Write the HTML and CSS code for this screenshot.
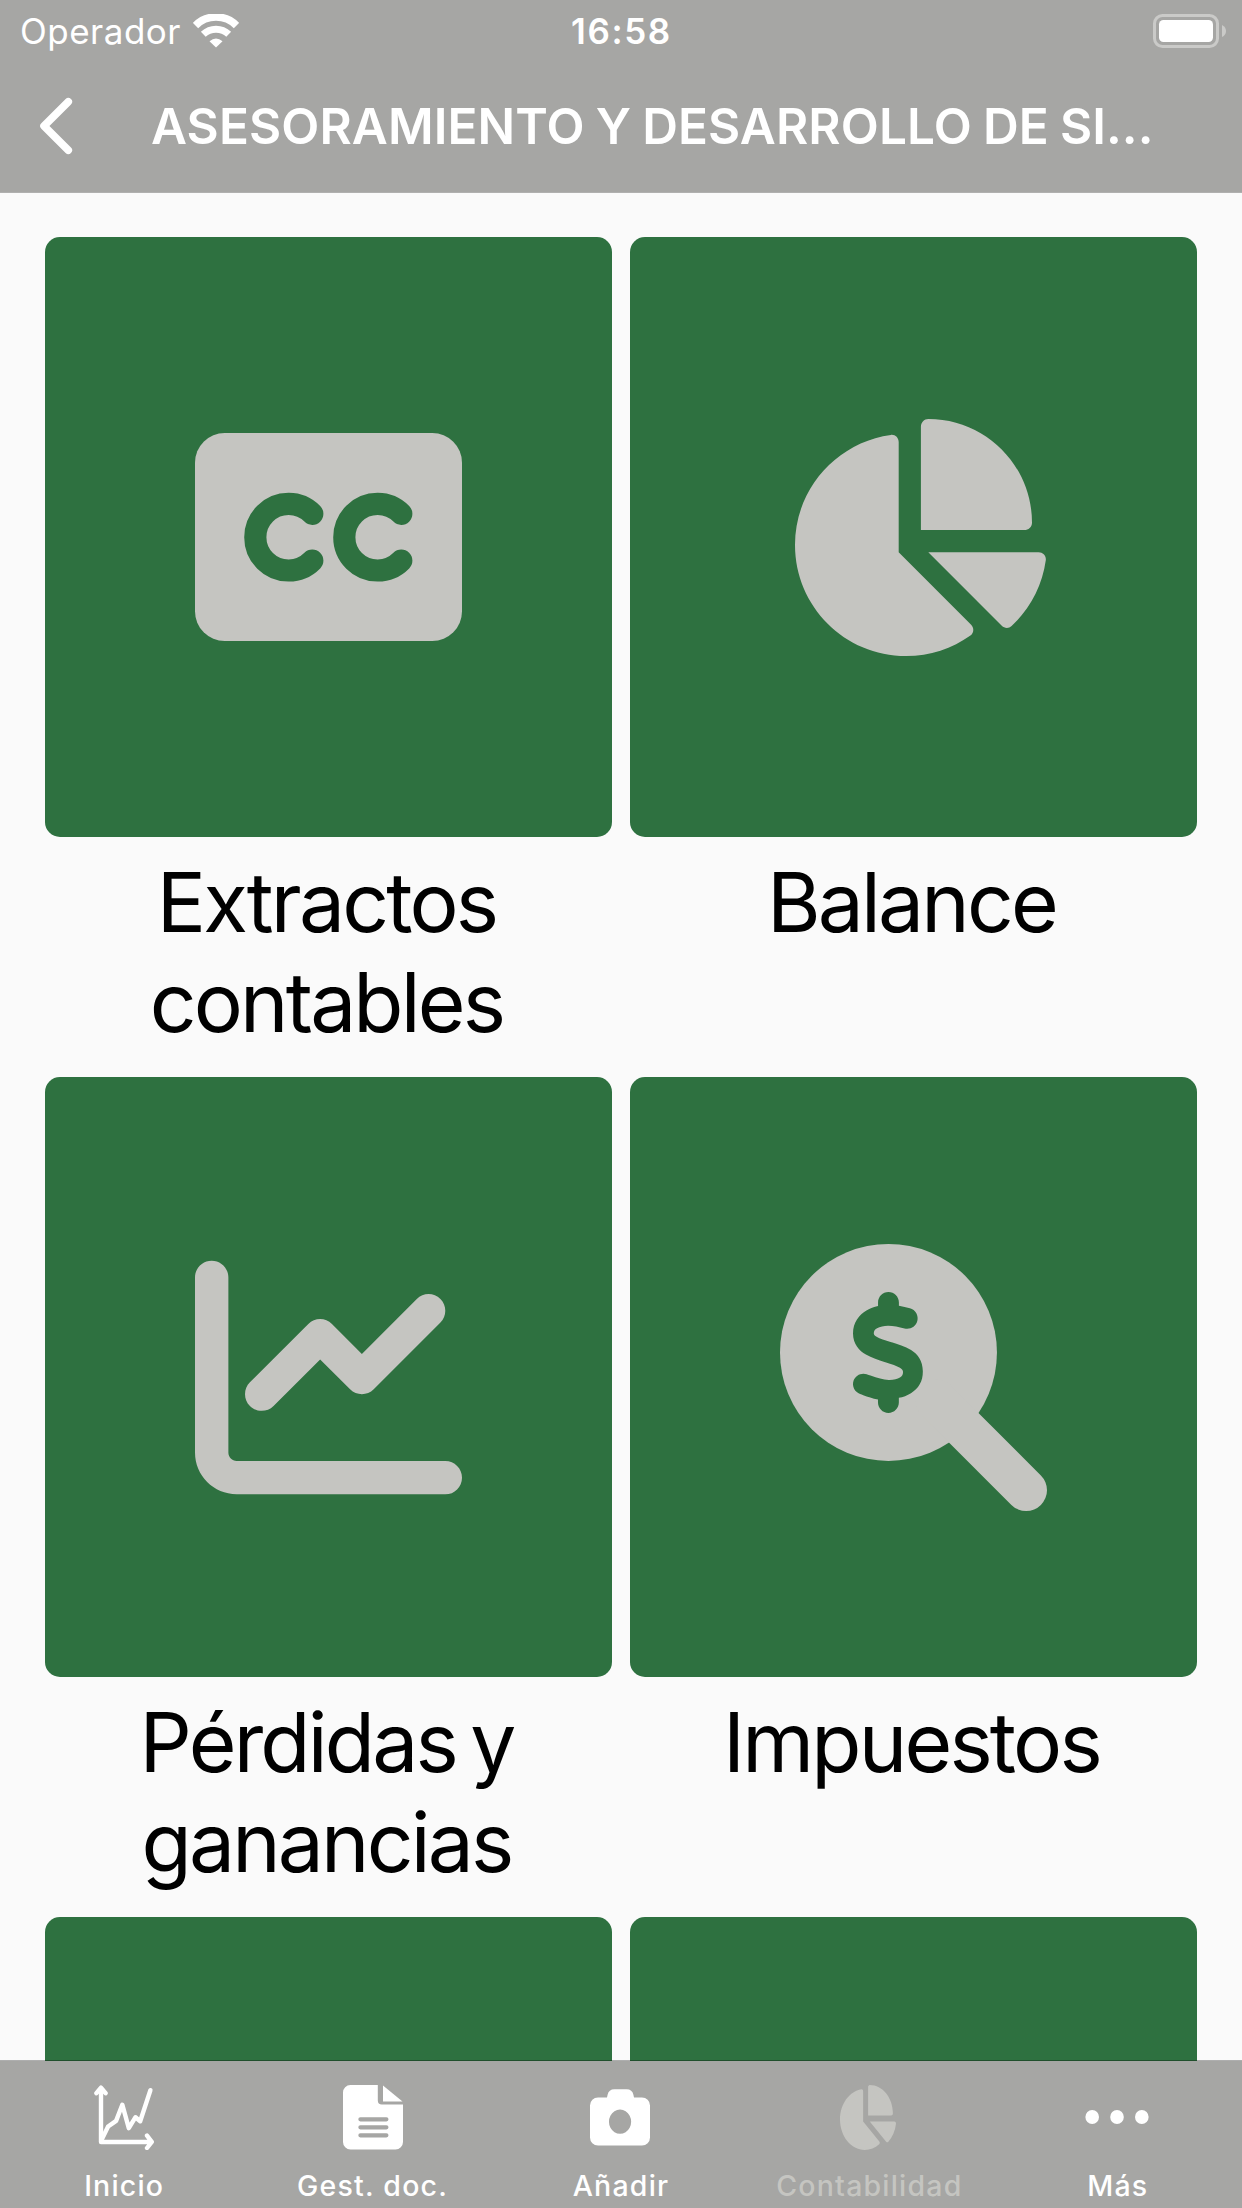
FILE: index.html
```html
<!DOCTYPE html>
<html lang="es">
<head>
    <meta charset="UTF-8">
    <meta name="viewport" content="width=device-width, initial-scale=1.0">
    <title>Contabilidad</title>
    <link rel="stylesheet" href="styles.css">
</head>
<body>
    <header class="header">
        <div class="status-bar">
            <div class="carrier">
                <span class="carrier-name">Operador</span>
                <svg class="wifi" viewBox="0 0 46 34">
                    <path d="M2.5 11.5a29 29 0 0 1 41 0" fill="none" stroke="#fff" stroke-width="7.6"/>
                    <path d="M10.3 20.3a18.5 18.5 0 0 1 25.4 0" fill="none" stroke="#fff" stroke-width="7"/>
                    <path d="M16.5 27.2q6.5-5.4 13 0L23 33.5z" fill="#fff"/>
                </svg>
            </div>
            <span class="clock">16:58</span>
            <svg class="battery" viewBox="0 0 73 34">
                <rect x="1.5" y="1.5" width="63" height="31" rx="8" fill="none" stroke="#cacac8" stroke-width="3"/>
                <rect x="6" y="6" width="54" height="22" rx="4.5" fill="#fff"/>
                <path d="M69 11q4 2 4 6t-4 6z" fill="#cacac8"/>
            </svg>
        </div>
        <div class="nav-bar">
            <svg class="back" viewBox="0 0 34 58">
                <path d="M29.3 4.8L5 29l24.3 24.2" fill="none" stroke="#fff" stroke-width="7.6" stroke-linecap="round" stroke-linejoin="round"/>
            </svg>
            <h1 class="title">ASESORAMIENTO Y DESARROLLO DE SI...</h1>
        </div>
    </header>

    <main class="grid">
        <a class="item">
            <div class="card">
                <svg class="icon icon-cc" viewBox="0 0 267 208">
                    <rect width="267" height="208" rx="29.7" fill="#c5c5c1"/>
                    <g fill="none" stroke="#2e7140" stroke-width="22.2" stroke-linecap="round">
                        <path d="M117.3 80.8a33.3 33.3 0 1 0 0 46.8"/>
                        <path d="M206.3 80.8a33.3 33.3 0 1 0 0 46.8"/>
                    </g>
                </svg>
            </div>
            <span class="label">Extractos contables</span>
        </a>
        <a class="item">
            <div class="card">
                <svg class="icon icon-pie" viewBox="0 0 576 512">
                    <path d="M304 240V16.6c0-9 7-16.6 16-16.6C443.7 0 544 100.3 544 224c0 9-7.6 16-16.6 16H304zM32 272C32 150.7 122.1 50.3 239 34.3c9.2-1.3 17 6.1 17 15.4V288L412.5 444.5c6.7 6.7 6.2 17.7-1.5 23.1C371.8 495.6 323.8 512 272 512C139.5 512 32 404.6 32 272zm526.4 16c9.3 0 16.6 7.8 15.4 17c-7.7 55.9-34.6 105.6-73.9 142.3c-6 5.6-15.4 5.2-21.2-.7L320 288H558.4z"/>
                </svg>
            </div>
            <span class="label">Balance</span>
        </a>
        <a class="item">
            <div class="card">
                <svg class="icon" viewBox="0 0 512 512">
                    <path d="M64 64c0-17.7-14.3-32-32-32S0 46.3 0 64V400c0 44.2 35.8 80 80 80H480c17.7 0 32-14.3 32-32s-14.3-32-32-32H80c-8.8 0-16-7.2-16-16V64zm406.6 86.6c12.5-12.5 12.5-32.8 0-45.3s-32.8-12.5-45.3 0L320 210.7l-57.4-57.4c-12.5-12.5-32.8-12.5-45.3 0l-112 112c-12.5 12.5-12.5 32.8 0 45.3s32.8 12.5 45.3 0L240 221.3l57.4 57.4c12.5 12.5 32.8 12.5 45.3 0l128-128z"/>
                </svg>
            </div>
            <span class="label">Pérdidas y ganancias</span>
        </a>
        <a class="item">
            <div class="card">
                <svg class="icon" viewBox="0 0 512 512">
                    <circle cx="208" cy="208" r="208"/>
                    <path d="M300 300l172 172" stroke="#c5c5c1" stroke-width="80" stroke-linecap="round"/>
                    <path class="cutout" d="M228 112c0-11-9-20-20-20s-20 9-20 20v7c-7.6 1.7-15.2 4.4-22.2 8.5c-13.9 8.3-25.9 22.8-25.8 43.9c.1 20.3 12 33.1 24.7 40.7c11 6.6 24.7 10.8 35.6 14l1.7 .5c12.6 3.8 21.8 6.8 28 10.7c5.1 3.2 5.8 5.4 5.9 8.2c.1 5-1.8 8-5.9 10.5c-5 3.1-12.9 5-21.4 4.7c-11.1-.4-21.5-3.9-35.1-8.5c-2.3-.8-4.7-1.6-7.2-2.4c-10.5-3.5-21.8 2.2-25.3 12.6s2.2 21.8 12.6 25.3c1.9 .6 4 1.3 6.1 2.1c8.3 2.9 17.9 6.2 28.2 8.4V304c0 11 9 20 20 20s20-9 20-20v-9c8-1.7 16-4.5 23.2-9c14.3-8.9 23.1-22.1 22.8-42c-.3-20.3-9.7-32.4-22.6-40.6c-11.5-7.2-25.9-11.6-37.1-15l-.7-.2c-12.8-3.9-21.9-6.7-28.3-10.5c-5.2-3.1-5.3-4.9-5.3-6.7c0-3.7 1.4-6.5 6.2-9.3c5.4-3.2 13.6-5.1 21.5-5c9.6 .1 20.2 2.2 31.2 5.2c10.7 2.8 21.6-3.5 24.5-14.2s-3.5-21.6-14.2-24.5c-6.5-1.7-13.7-3.4-21.1-4.7z"/>
                </svg>
            </div>
            <span class="label">Impuestos</span>
        </a>
        <a class="item"><div class="card"></div></a>
        <a class="item"><div class="card"></div></a>
    </main>

    <nav class="tab-bar">
        <a class="tab">
            <svg class="tab-icon" viewBox="0 0 66 66">
                <g fill="none" stroke="#fff" stroke-width="4.4" stroke-linecap="round" stroke-linejoin="round">
                    <path d="M5.4 9.2L10 3.6l4.6 5.6M10 4v54h50M56 51.6l4.8 6.2-4.8 6.2"/>
                    <path d="M10.5 56l6.6-13.5 8-5.6 6.2-16.2 6.5 23.5 6.7-11 4.7 4 10.2-31"/>
                </g>
            </svg>
            <span>Inicio</span>
        </a>
        <a class="tab">
            <svg class="tab-icon" viewBox="0 0 66 66" fill="#fff">
                <path d="M10.4 1H37.8v15.5a4 4 0 0 0 4 4H63V58a7.5 7.5 0 0 1-7.5 7.5h-45A7.5 7.5 0 0 1 3 58V8.5A7.5 7.5 0 0 1 10.4 1z"/>
                <path d="M43 1.6l19.5 15.8H43z"/>
                <path d="M20.4 35.3h26M20.4 43.3h26M20.4 51.3h26" stroke="#a6a6a4" stroke-width="4.2" stroke-linecap="round"/>
            </svg>
            <span>Gest. doc.</span>
        </a>
        <a class="tab">
            <svg class="tab-icon" viewBox="0 0 66 66">
                <path fill="#fff" fill-rule="evenodd" d="M19 13.5l.6-2.7a7 7 0 0 1 6.8-5.5h12.2a7 7 0 0 1 6.8 5.5l.6 2.7H54a8 8 0 0 1 8 8v32a8 8 0 0 1-8 8H10a8 8 0 0 1-8-8v-32a8 8 0 0 1 8-8zM32 25.6a11.1 12.1 0 1 0 .1 0z"/>
            </svg>
            <span>Añadir</span>
        </a>
        <a class="tab active">
            <svg class="tab-icon tab-pie" viewBox="32 0 542 512" preserveAspectRatio="none">
                <path fill="#c5c5c1" d="M304 240V16.6c0-9 7-16.6 16-16.6C443.7 0 544 100.3 544 224c0 9-7.6 16-16.6 16H304zM32 272C32 150.7 122.1 50.3 239 34.3c9.2-1.3 17 6.1 17 15.4V288L412.5 444.5c6.7 6.7 6.2 17.7-1.5 23.1C371.8 495.6 323.8 512 272 512C139.5 512 32 404.6 32 272zm526.4 16c9.3 0 16.6 7.8 15.4 17c-7.7 55.9-34.6 105.6-73.9 142.3c-6 5.6-15.4 5.2-21.2-.7L320 288H558.4z"/>
            </svg>
            <span>Contabilidad</span>
        </a>
        <a class="tab">
            <svg class="tab-icon" viewBox="0 0 66 66" fill="#fff">
                <ellipse cx="7.2" cy="33" rx="6.8" ry="7"/>
                <ellipse cx="32" cy="33" rx="6.8" ry="7"/>
                <ellipse cx="56.8" cy="33" rx="6.8" ry="7"/>
            </svg>
            <span>Más</span>
        </a>
    </nav>
</body>
</html>
```
FILE: styles.css
```css
* {
    box-sizing: border-box;
}
body {
    margin: 0;
    height: 2208px;
    display: flex;
    flex-direction: column;
    overflow: hidden;
    background-color: #fafafa;
    font-family: Inter, "Liberation Sans", sans-serif;
}
svg {
    display: block;
    flex-shrink: 0;
}
.header {
    height: 193px;
    flex-shrink: 0;
    background-color: #a6a6a4;
    border-bottom: 1px solid #b0b0af;
    color: white;
}
.status-bar {
    display: grid;
    grid-template-columns: 1fr auto 1fr;
    align-items: center;
    height: 60px;
    padding: 0 16px 0 20px;
}
.carrier {
    display: flex;
    align-items: center;
    gap: 12px;
}
.carrier-name {
    font-size: 35px;
    line-height: 62px;
    letter-spacing: 0.5px;
}
.wifi {
    width: 46px;
    height: 34px;
}
.clock {
    padding-right: 3px;
    font-size: 35px;
    font-weight: 600;
    line-height: 62px;
    letter-spacing: 1.6px;
}
.battery {
    width: 73px;
    height: 34px;
    justify-self: end;
}
.nav-bar {
    display: flex;
    align-items: center;
    height: 132px;
    padding-left: 39px;
}
.back {
    width: 34px;
    height: 58px;
}
.title {
    margin: 0 0 0 78px;
    font-size: 49.5px;
    font-weight: 600;
    line-height: 60px;
    letter-spacing: 0.1px;
    word-spacing: -1.5px;
    white-space: nowrap;
}
.grid {
    flex: 1;
    min-height: 0;
    overflow: hidden;
    display: grid;
    grid-template-columns: 1fr 1fr;
    grid-auto-rows: 815px;
    gap: 25px 18px;
    padding: 44px 45px 0;
}
.item {
    display: flex;
    flex-direction: column;
    align-items: center;
    gap: 16px;
}
.card {
    width: 100%;
    height: 600px;
    flex-shrink: 0;
    display: flex;
    align-items: center;
    justify-content: center;
    background-color: #2e7140;
    border-radius: 15px;
}
.icon {
    width: 267px;
    height: 267px;
    fill: #c5c5c1;
}
.icon-cc {
    height: 208px;
}
.icon-pie {
    height: 237px;
}
.icon .cutout {
    fill: #2e7140;
}
.label {
    width: 460px;
    padding-right: 4px;
    text-align: center;
    font-size: 82px;
    line-height: 100px;
    letter-spacing: -2.8px;
    word-spacing: -6px;
    color: black;
}
.tab-bar {
    position: relative;
    display: grid;
    grid-template-columns: repeat(5, 1fr);
    height: 148px;
    margin-top: -1px;
    flex-shrink: 0;
    background-color: #a6a6a4;
    background-clip: padding-box;
    border-top: 1px solid rgba(0, 0, 0, 0.3);
}
.tab {
    display: flex;
    flex-direction: column;
    align-items: center;
    padding-top: 23px;
    color: white;
    font-size: 28.5px;
    font-weight: 500;
    line-height: 34px;
    letter-spacing: 1.2px;
}
.tab-icon {
    width: 66px;
    height: 66px;
    margin-bottom: 19px;
}
.tab-pie {
    width: 56px;
    height: 65px;
    margin: 1px 2px 19px 0;
}
.active {
    color: #c5c5c1;
}
```
